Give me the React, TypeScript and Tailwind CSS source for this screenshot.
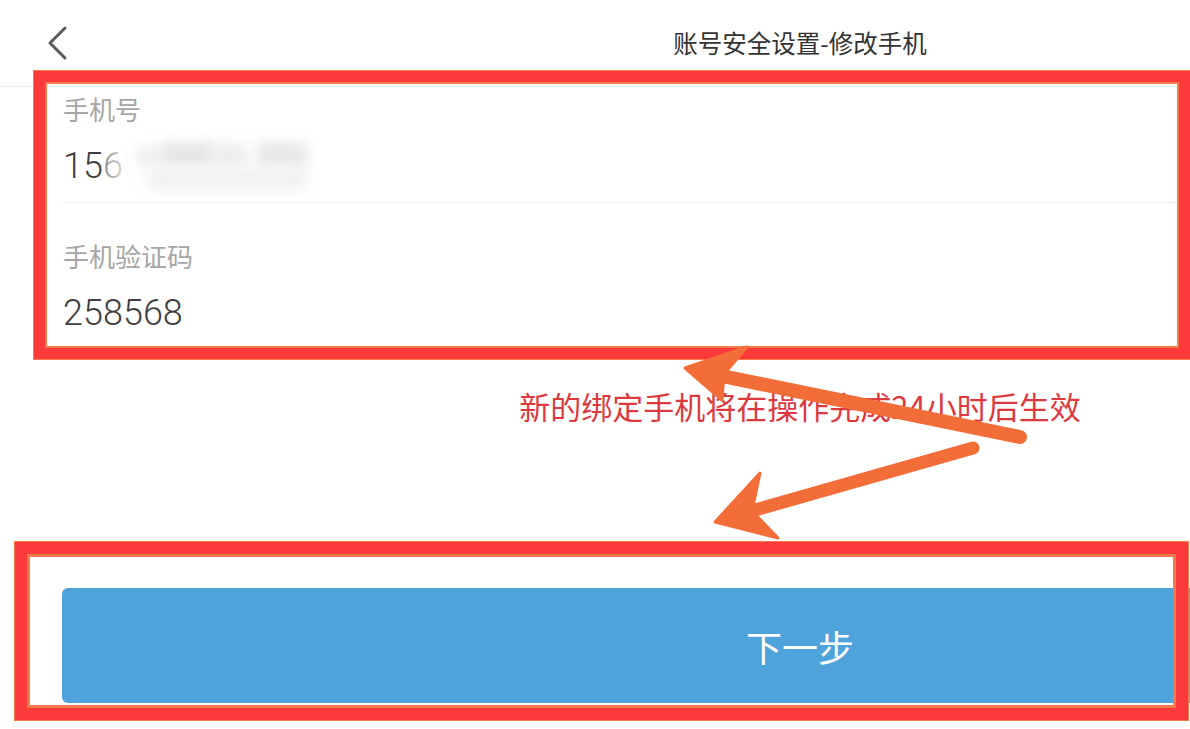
import React from "react";

const cjk = { fontFamily: '"Noto Sans CJK SC", "Noto Sans", sans-serif' };
const num = { fontFamily: 'Roboto, "Noto Sans CJK SC", sans-serif' };

// Header bar with back chevron and centred title
const Header: React.FC = () => (
  <div className="grid h-[87px] grid-cols-[1fr_auto_1fr] items-center border-b border-[#ececec]">
    <div className="pl-[44px]">
      <svg width="28" height="36" viewBox="0 0 28 36" fill="none">
        <polyline
          points="21,3 6,18 21,33"
          stroke="#5a5a5a"
          strokeWidth="3"
          strokeLinecap="round"
          strokeLinejoin="round"
        />
      </svg>
    </div>
    <h1 className="text-[24.5px] leading-none text-[#333]" style={cjk}>
      账号安全设置-修改手机
    </h1>
    <div />
  </div>
);

const Field: React.FC<{
  label: string;
  top: string;
  divider?: boolean;
  children: React.ReactNode;
}> = ({ label, top, divider, children }) => (
  <div className={`${top} ${divider ? "border-b border-[#efefef] pb-[12px]" : ""}`}>
    <div className="h-[36px] text-[26px] leading-[36px] text-[#a6a6a6]" style={cjk}>
      {label}
    </div>
    <div className="relative mt-[15px] h-[48px] text-[36px] font-light leading-[48px] text-[#3f3f3f]" style={num}>
      {children}
    </div>
  </div>
);

// Blurred-out part of the phone number
const Mosaic: React.FC = () => (
  <div className="pointer-events-none absolute left-[44px] top-[-6px] h-[64px] w-[212px]">
    <div className="absolute inset-0 bg-gradient-to-r from-white/0 via-white via-[12%] to-white" />
    <div className="absolute left-[30px] top-[10px] h-[20px] w-[30px] bg-[#f0f0f0] blur-[6px]" />
    <div className="absolute left-[56px] top-[6px] h-[24px] w-[50px] bg-[#e6e6e6] blur-[6px]" />
    <div className="absolute left-[104px] top-[8px] h-[22px] w-[36px] bg-[#ededed] blur-[6px]" />
    <div className="absolute left-[150px] top-[6px] h-[26px] w-[50px] bg-[#e8e8e8] blur-[6px]" />
    <div className="absolute left-[40px] top-[32px] h-[22px] w-[160px] bg-[#f1f1f1] blur-[7px]" />
  </div>
);

export default function App() {
  return (
    <div className="relative h-[729px] w-full overflow-hidden bg-white">
      <div className="w-[1600px]">
        <Header />

        <div className="pl-[63px]">
          <Field label="手机号" top="pt-[4px]" divider>
            <span>15</span>
            <span className="text-[#9a9a9a]">6</span>
            <span className="text-[#f2f2f2]">88888888</span>
            <Mosaic />
          </Field>
          <Field label="手机验证码" top="pt-[35px]">
            258568
          </Field>
        </div>

        <p className="mt-[49px] h-[40px] text-center text-[31px] leading-[40px] text-[#dc3a40]" style={cjk}>
          新的绑定手机将在操作完成24小时后生效
        </p>

        <button
          className="mx-[62px] mt-[162px] flex h-[115px] w-[1476px] items-center justify-center rounded-[6px] bg-[#4ea3db] text-[36px] text-white"
          style={cjk}
        >
          下一步
        </button>
      </div>

      {/* annotation boxes */}
      <div className="pointer-events-none absolute left-[34px] top-[71px] h-[288px] w-[1156px] border-[11px] border-[#fd3a3a] shadow-[0_0_0_1px_#f5794a,inset_0_0_0_2px_#f5794a]" />
      <div className="pointer-events-none absolute left-[15px] top-[542px] h-[178px] w-[1173px] border-[12px] border-[#fd3a3a] shadow-[0_0_0_1px_#f5794a,inset_0_0_0_3px_#f5794a]" />

      {/* annotation arrows */}
      <svg
        className="pointer-events-none absolute left-0 top-0"
        width="1190"
        height="729"
        viewBox="0 0 1190 729"
      >
        <g fill="#f36d39" stroke="#f36d39" strokeLinejoin="round">
          <line x1="1020" y1="437" x2="712" y2="374" strokeWidth="14" strokeLinecap="round" />
          <polygon points="685,368 747,347 724,374 722,400" strokeWidth="3" />
          <line x1="973" y1="448" x2="748" y2="512" strokeWidth="13" strokeLinecap="round" />
          <polygon points="715,522 760,473 752,511 778,538" strokeWidth="3" />
        </g>
      </svg>
    </div>
  );
}
